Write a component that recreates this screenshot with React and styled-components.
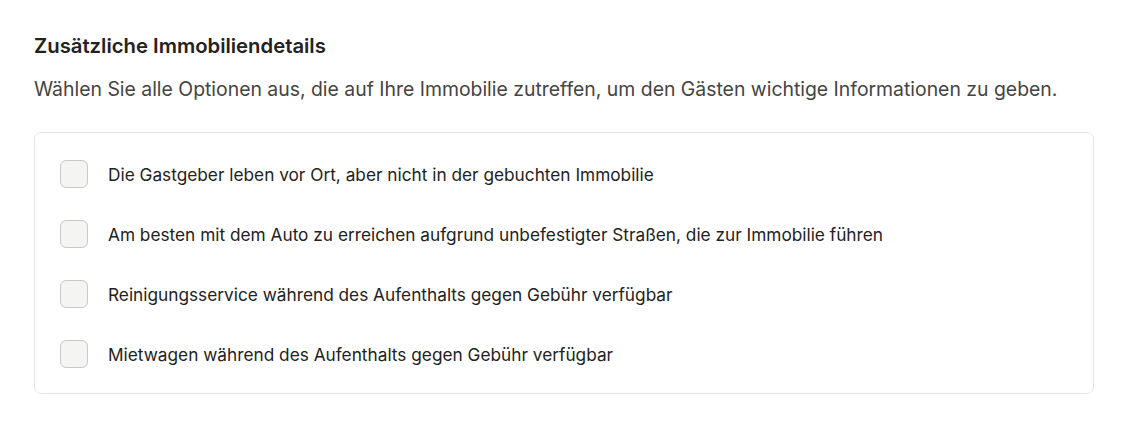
import React from "react";
import styled, { createGlobalStyle } from "styled-components";

const GlobalStyle = createGlobalStyle`
  body {
    margin: 0;
    background: #fff;
    font-family: Inter, "Noto Sans", sans-serif;
    color: #222;
  }
`;

const Section = styled.section`
  padding: 34px 44px 0 34px;
`;

const Title = styled.h2`
  margin: 0;
  font-size: 20.3px;
  font-weight: 600;
  line-height: 24px;
  color: #222;
`;

const Lead = styled.p`
  margin: 18px 0 0;
  font-size: 19.4px;
  line-height: 26px;
  color: #444;
`;

const Card = styled.div`
  margin-top: 30px;
  border: 1px solid #e4e4e4;
  border-radius: 7px;
  padding: 11px 25px 9px;
  display: flex;
  flex-direction: column;
`;

const Row = styled.label`
  display: flex;
  align-items: center;
  gap: 20px;
  height: 60px;
  font-size: 17.25px;
  color: #222;
  cursor: pointer;
`;

const Box = styled.span`
  width: 28px;
  height: 28px;
  box-sizing: border-box;
  border: 1px solid #c9c9c9;
  border-radius: 6px;
  background: #f4f4f3;
  flex-shrink: 0;
`;

const options = [
  "Die Gastgeber leben vor Ort, aber nicht in der gebuchten Immobilie",
  "Am besten mit dem Auto zu erreichen aufgrund unbefestigter Straßen, die zur Immobilie führen",
  "Reinigungsservice während des Aufenthalts gegen Gebühr verfügbar",
  "Mietwagen während des Aufenthalts gegen Gebühr verfügbar",
];

export default function App() {
  return (
    <>
      <GlobalStyle />
      <Section>
        <Title>Zusätzliche Immobiliendetails</Title>
        <Lead>
          Wählen Sie alle Optionen aus, die auf Ihre Immobilie zutreffen, um den Gästen wichtige Informationen zu geben.
        </Lead>
        <Card>
          {options.map((o) => (
            <Row key={o}>
              <Box />
              {o}
            </Row>
          ))}
        </Card>
      </Section>
    </>
  );
}
